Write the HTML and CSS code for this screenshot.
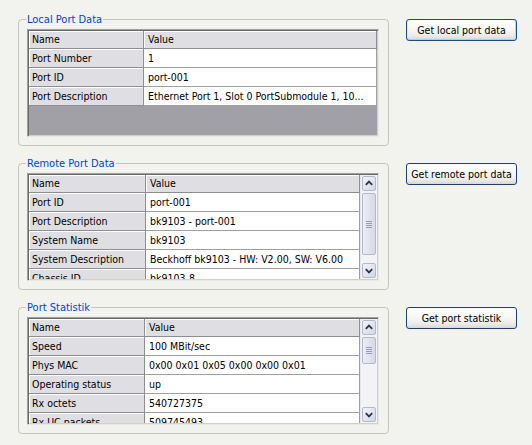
FILE: index.html
```html
<!DOCTYPE html>
<html>
<head>
<meta charset="utf-8">
<title>Port Data</title>
<link rel="stylesheet" href="styles.css">
</head>
<body>
<div class="page">
  <section class="row">
    <div class="group">
      <span class="title">Local Port Data</span>
      <div class="grid grid-plain">
        <div class="table c115">
          <div class="hd">Name</div><div class="hd">Value</div>
          <div class="rh">Port Number</div><div class="cell">1</div>
          <div class="rh">Port ID</div><div class="cell">port-001</div>
          <div class="rh">Port Description</div><div class="cell">Ethernet Port 1, Slot 0 PortSubmodule 1, 10...</div>
        </div>
        <div class="empty"></div>
      </div>
    </div>
    <button class="btn btn-default">Get local port data</button>
  </section>

  <section class="row">
    <div class="group">
      <span class="title">Remote Port Data</span>
      <div class="grid grid-scroll">
        <div class="body">
          <div class="table c117">
            <div class="hd">Name</div><div class="hd">Value</div>
            <div class="rh">Port ID</div><div class="cell">port-001</div>
            <div class="rh">Port Description</div><div class="cell">bk9103 - port-001</div>
            <div class="rh">System Name</div><div class="cell">bk9103</div>
            <div class="rh">System Description</div><div class="cell">Beckhoff bk9103 - HW: V2.00, SW: V6.00</div>
            <div class="rh">Chassis ID</div><div class="cell">bk9103-8</div>
          </div>
        </div>
        <div class="vscroll">
          <div class="sb-btn"><svg width="13" height="13" viewBox="0 0 13 13"><polyline points="3,8 6.5,4.5 10,8" fill="none" stroke="#2d3450" stroke-width="2"/></svg></div>
          <div class="sb-thumb thumb-long"><span class="grip"></span></div>
          <div class="sb-space"></div>
          <div class="sb-btn"><svg width="13" height="13" viewBox="0 0 13 13"><polyline points="3,5 6.5,8.5 10,5" fill="none" stroke="#2d3450" stroke-width="2"/></svg></div>
        </div>
      </div>
    </div>
    <button class="btn">Get remote port data</button>
  </section>

  <section class="row">
    <div class="group">
      <span class="title">Port Statistik</span>
      <div class="grid grid-scroll">
        <div class="body">
          <div class="table c116">
            <div class="hd">Name</div><div class="hd">Value</div>
            <div class="rh">Speed</div><div class="cell">100 MBit/sec</div>
            <div class="rh">Phys MAC</div><div class="cell">0x00 0x01 0x05 0x00 0x00 0x01</div>
            <div class="rh">Operating status</div><div class="cell">up</div>
            <div class="rh">Rx octets</div><div class="cell">540727375</div>
            <div class="rh">Rx UC packets</div><div class="cell">509745493</div>
          </div>
        </div>
        <div class="vscroll">
          <div class="sb-btn"><svg width="13" height="13" viewBox="0 0 13 13"><polyline points="3,8 6.5,4.5 10,8" fill="none" stroke="#2d3450" stroke-width="2"/></svg></div>
          <div class="sb-thumb thumb-short"><span class="grip"></span></div>
          <div class="sb-space"></div>
          <div class="sb-btn"><svg width="13" height="13" viewBox="0 0 13 13"><polyline points="3,5 6.5,8.5 10,5" fill="none" stroke="#2d3450" stroke-width="2"/></svg></div>
        </div>
      </div>
    </div>
    <button class="btn">Get port statistik</button>
  </section>
</div>
</body>
</html>
```

FILE: styles.css
```css
html, body {
  margin: 0;
  padding: 0;
}
body {
  background: #f2f2ee;
  font-family: "DejaVu Sans Condensed", "DejaVu Sans", sans-serif;
  font-size: 10.5px;
  color: #000;
  width: 532px;
  height: 445px;
  overflow: hidden;
}
.page {
  display: flex;
  flex-direction: column;
  gap: 17px;
  padding: 19px 0 0 18px;
}
.row {
  display: flex;
  align-items: flex-start;
  gap: 17px;
}
.group {
  position: relative;
  box-sizing: border-box;
  width: 371px;
  height: 127px;
  border: 1px solid #c6c6bf;
  border-radius: 4px;
  padding: 9px 0 0 8px;
}
.title {
  position: absolute;
  top: -7px;
  left: 7px;
  padding: 0 1px;
  line-height: 13px;
  background: #f2f2ee;
  color: #0046d5;
  font-size: 11px;
}
.grid {
  box-sizing: border-box;
  width: 352px;
  height: 108px;
  border: 1px solid;
  border-color: #a0a0a0 #e8e8e8 #e8e8e8 #a0a0a0;
  box-shadow: inset 1px 1px 0 #696969, inset -1px -1px 0 #d4d0c8;
  padding: 1px;
  overflow: hidden;
}
.grid-plain {
  display: flex;
  flex-direction: column;
}
.grid-scroll {
  display: flex;
}
.body {
  flex: 1;
  min-width: 0;
  overflow: hidden;
  background: #fff;
}
.empty {
  flex: 1;
  background: #a0a0a6;
}
.table {
  display: grid;
  background: #fff;
}
.c115 { grid-template-columns: 115px 1fr; }
.c116 { grid-template-columns: 116px 1fr; }
.c117 { grid-template-columns: 117px 1fr; }
.hd, .rh, .cell {
  box-sizing: border-box;
  height: 19px;
  line-height: 18px;
  white-space: nowrap;
  overflow: hidden;
  border-bottom: 1px solid #a0a0a0;
  border-right: 1px solid #a0a0a0;
}
.hd {
  height: 18px;
  line-height: 17px;
}
.hd, .rh {
  background: #dfdfe3;
  box-shadow: inset 1px 1px 0 #ffffff;
  padding: 0 3px;
  border-color: #8e8e92;
}
.hd:nth-child(2) {
  padding-left: 4px;
}
.cell {
  padding: 0 4px;
  background: #fff;
}
.vscroll {
  box-sizing: border-box;
  width: 17px;
  flex: none;
  display: flex;
  flex-direction: column;
  padding: 1px;
  background: #f3f3f7;
  border-left: 1px solid #e6e6ec;
}
.sb-btn {
  box-sizing: border-box;
  height: 15px;
  flex: none;
  border: 1px solid #b4b8ca;
  border-radius: 2px;
  background: linear-gradient(135deg, #f4f5fb, #d3d6e3);
  display: flex;
  align-items: center;
  justify-content: center;
}
.sb-btn svg {
  display: block;
}
.sb-thumb {
  box-sizing: border-box;
  flex: none;
  margin-top: 2px;
  border: 1px solid #b4b8ca;
  border-radius: 2px;
  background: linear-gradient(to right, #eceef6, #d6d9e6);
  display: flex;
  align-items: center;
  justify-content: center;
}
.thumb-long { height: 62px; }
.thumb-short { height: 27px; }
.grip {
  width: 6px;
  height: 7px;
  background: repeating-linear-gradient(to bottom, #969bb2 0 1px, transparent 1px 2px);
}
.sb-space {
  flex: 1;
}
.btn {
  box-sizing: border-box;
  width: 111px;
  height: 22px;
  margin-top: 0;
  border: 1px solid #1f3f73;
  border-radius: 3px;
  background: linear-gradient(to bottom, #ffffff 0%, #f7f7f4 45%, #ebebe6 80%, #d8d8d0 100%);
  font-family: "DejaVu Sans Condensed", "DejaVu Sans", sans-serif;
  font-size: 10.5px;
  color: #000;
  padding: 0;
  text-align: center;
}
.btn-default {
  border-color: #1e4a8c;
  box-shadow: inset 0 -1px 0 #b8c8e6, inset 1px 0 0 #dde6f5, inset -1px 0 0 #c6d4ee;
}
```
